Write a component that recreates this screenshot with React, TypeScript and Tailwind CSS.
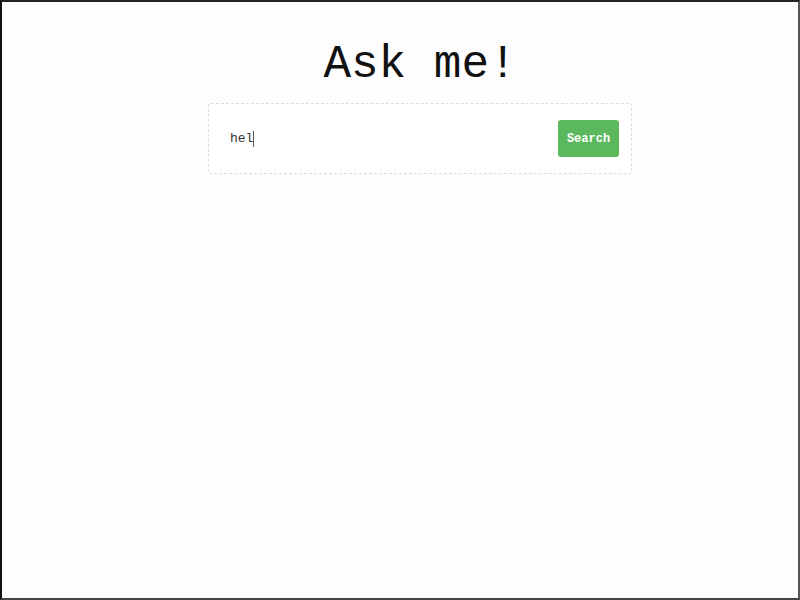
export default function App() {
  return (
    <div className="w-[800px] h-[600px] bg-[#fdfdfd] border-2 border-l-[#111] border-t-[#222] border-r-[#555] border-b-[#444] flex flex-col items-center pl-10 font-['Liberation_Mono','Courier_New',monospace]">
      <h1 className="mt-[40px] text-[46px] leading-none text-[#111]">Ask me!</h1>

      {/* Search card */}
      <div className="mt-[15px] w-[424px] h-[71px] bg-white border border-dashed border-[#dcdde3] rounded-[3px] flex items-center justify-between pl-[21px] pr-[12px]">
        <div className="flex items-center text-[13px] text-[#333]">
          <span>hel</span>
          <span className="w-px h-[16px] bg-[#555]" />
        </div>
        <button className="w-[61px] h-[37px] bg-[#5cb85c] rounded-[3px] text-white text-[12px] font-bold">
          Search
        </button>
      </div>
    </div>
  );
}
